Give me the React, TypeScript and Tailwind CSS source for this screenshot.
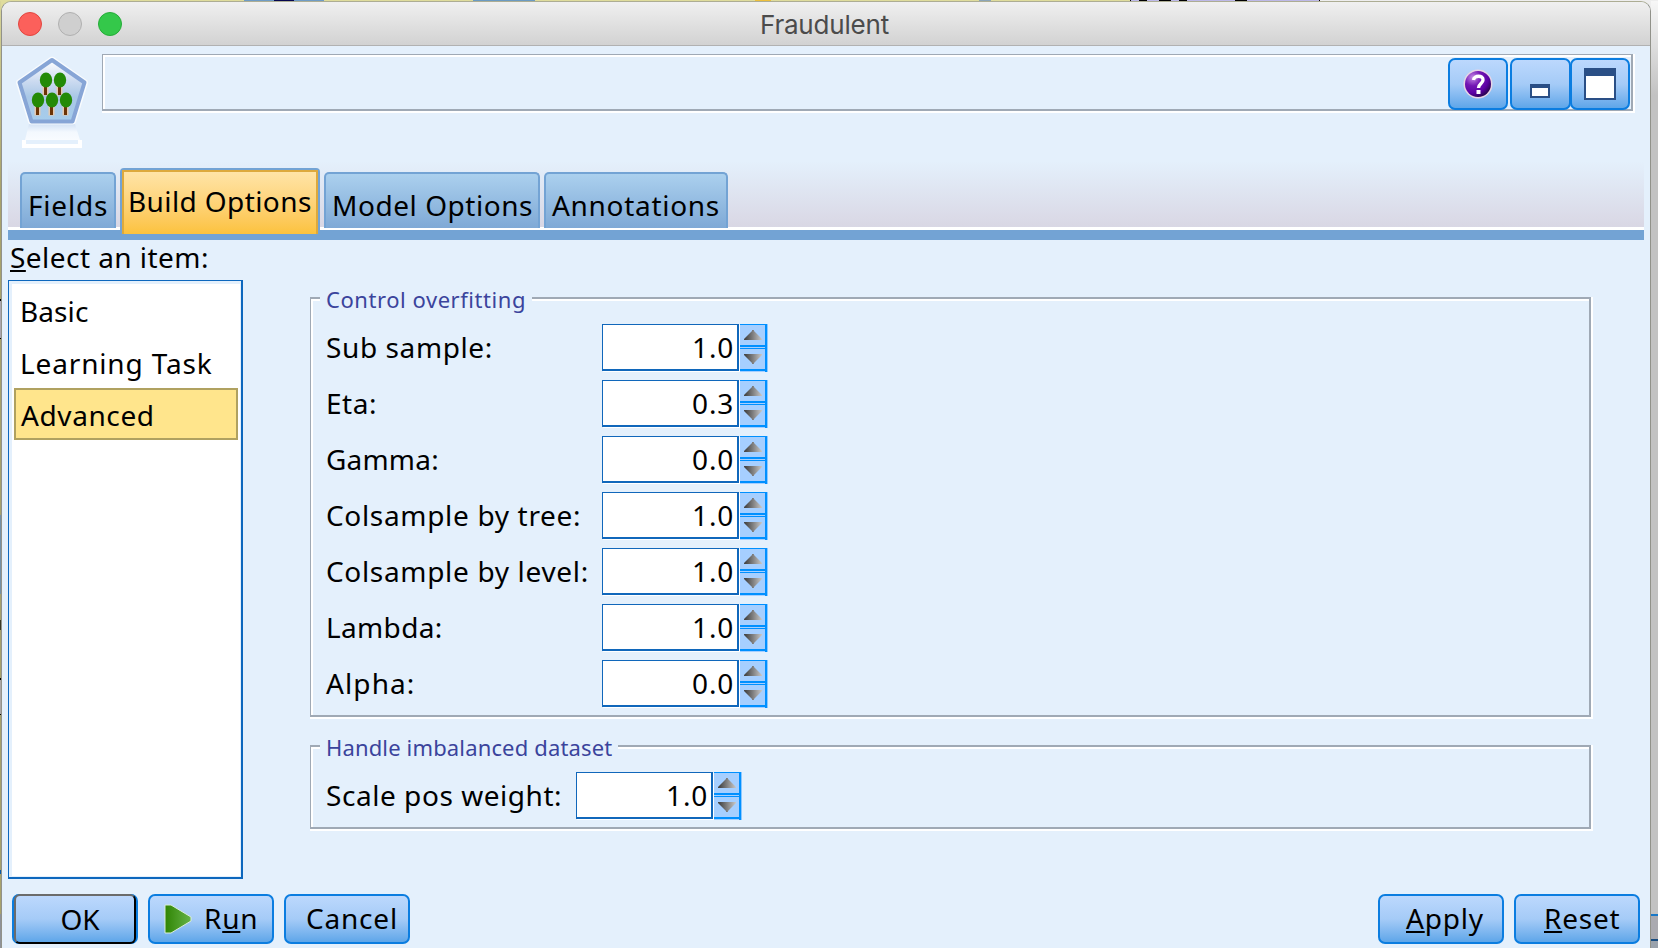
import type { ReactNode } from 'react';

const FONT = 'font-["Noto_Sans","Open_Sans",sans-serif] text-[28px] whitespace-pre text-black';
const TEXT = `${FONT} leading-[48px]`;

function Key({ children }: { children: ReactNode }) {
  return <span className="underline decoration-2 underline-offset-2 [text-decoration-skip-ink:none]">{children}</span>;
}

function ModelIcon() {
  return (
    <svg width="76" height="96" viewBox="14 54 76 96">
      <defs>
        <linearGradient id="penta" x1="0" y1="0" x2="0" y2="1">
          <stop offset="0" stopColor="#ffffff" />
          <stop offset="0.35" stopColor="#cbdaf0" />
          <stop offset="0.6" stopColor="#a9c7e6" />
          <stop offset="1" stopColor="#a6cdec" />
        </linearGradient>
        <linearGradient id="reflect" x1="0" y1="0" x2="0" y2="1">
          <stop offset="0" stopColor="#d3e2f5" />
          <stop offset="0.5" stopColor="#f3f8fe" />
          <stop offset="1" stopColor="#f8fbff" />
        </linearGradient>
      </defs>
      <path d="M22 140h60v8H22z" fill="#fff" />
      <path d="M26 140h52v4H26z" fill="#e4f0fc" />
      <path d="M29 124h46l5 16H25z" fill="url(#reflect)" />
      <path d="M52 59.5 85 82.500 73 121.500H31L19 82.500z" fill="url(#penta)" stroke="#fff" strokeWidth="6" strokeLinejoin="round" opacity="0.75" />
      <path d="M52 60 84.500 82.500 72.500 121.500H31.500L19.500 82.500z" fill="url(#penta)" stroke="#87a5d6" strokeWidth="4" strokeLinejoin="round" />
      {[[46, 80], [60, 80], [38, 100], [52, 100], [66, 100]].map(([x, y]) => (
        <g key={`${x}-${y}`}>
          <rect x={x - 3.5} y={y + 5} width="6" height="10.500" fill="#e3c9b0" />
          <rect x={x - 2} y={y + 5} width="3" height="10" fill="#6b3407" />
          <ellipse cx={x} cy={y} rx="6.200" ry="7.500" fill="#238a06" />
        </g>
      ))}
    </svg>
  );
}

function HelpIcon() {
  return (
    <svg width="30" height="30" viewBox="0 0 30 30">
      <defs>
        <radialGradient id="orb" cx="0.3" cy="0.25" r="0.8">
          <stop offset="0" stopColor="#c58ae6" />
          <stop offset="0.4" stopColor="#7417b4" />
          <stop offset="0.75" stopColor="#5c00a4" />
          <stop offset="1" stopColor="#2b0450" />
        </radialGradient>
      </defs>
      <circle cx="15" cy="15" r="14.500" fill="#e6d5e6" />
      <circle cx="15" cy="15" r="13" fill="url(#orb)" />
      <path d="M10.500 11C11 6 20.500 6 20 11c0 3.500-4.500 3.500-4.500 8" fill="none" stroke="#fff" strokeWidth="3.400" />
      <rect x="13.500" y="21" width="4" height="4" fill="#fff" />
    </svg>
  );
}

const FACE = 'rounded-[7px] border-2 border-[#0b7de0] bg-linear-to-b from-[#bcd8fd] via-[#a5cbf7] to-[#5ea6e9]';

function ToolButton({ children, className }: { children: ReactNode; className: string }) {
  return <button className={`flex h-[52px] shrink-0 items-center justify-center ${FACE} ${className}`}>{children}</button>;
}

function Header() {
  return (
    <div className="flex h-[115px] pt-2">
      <div className="ml-3 w-[88px] shrink-0"><ModelIcon /></div>
      <div className="h-[59px] w-[1533px] border-r-2 border-b-2 border-white">
        <div className="h-full border-t border-r-2 border-b-2 border-l border-[#9fa9b5]">
          <div className="flex h-full justify-end border-t-2 border-l-2 border-white pt-px">
            <ToolButton className="mr-[2px] w-[60px]"><HelpIcon /></ToolButton>
            <ToolButton className="-mr-px w-[61px]">
              <span className="mt-[14px] mr-px h-[14px] w-5 border-2 border-t-4 border-[#2a4f86] bg-white" />
            </ToolButton>
            <ToolButton className="mr-px w-[60px]">
              <span className="h-8 w-8 border-2 border-t-8 border-[#2a4f86] bg-white" />
            </ToolButton>
          </div>
        </div>
      </div>
    </div>
  );
}

function Tab({ label, className }: { label: string; className: string }) {
  return (
    <div className={`mt-[11px] h-14 overflow-hidden rounded-t-[5px] border-2 border-b-0 border-[#73a3d4] bg-linear-to-b from-[#abd0ee] to-[#7fa9d6] ${TEXT} ${className}`}>
      <div className="mt-[7px]">{label}</div>
    </div>
  );
}

function Tabs() {
  return (
    <div className="ml-[6px] w-[1636px]">
      <div className="flex h-[69px] items-start bg-[linear-gradient(to_bottom,#e4f0fc_0px,#d9d7e4_66px,#ffffff_66px,#ffffff_69px)] pl-3">
        <Tab label="Fields" className="w-24 pl-[6px] tracking-[0.8px]" />
        <div className={`relative mx-1 mt-[7px] h-[66px] w-[200px] rounded-t-[4px] border-2 border-b-0 border-[#73a3d4] tracking-[0.4px] ${TEXT}`}>
          <div className="h-full border-2 border-b-0 border-[#dda93c] bg-linear-to-b from-[#ffe4a6] to-[#fcc23c] pl-[4px]">
            <div className="mt-[5px]">Build Options</div>
          </div>
        </div>
        <Tab label="Model Options" className="mr-1 w-[216px] pl-[6px] tracking-[0.55px]" />
        <Tab label="Annotations" className="w-[184px] pl-[6px] tracking-[0.7px]" />
      </div>
      <div className="h-[10px] bg-[#73a3d4]" />
    </div>
  );
}

function ItemList() {
  return (
    <div className="h-[599px] w-[235px] border-t border-r-2 border-b-2 border-l border-[#0d67bd] bg-white">
      <div className={`h-full border-t-[3px] border-r border-b border-l-[3px] border-[#e4f0fc] px-[2px] ${FONT}`}>
        <div className="h-[52px] pl-[6px] leading-[54px] tracking-[0.1px]">Basic</div>
        <div className="h-[52px] pl-[6px] leading-[54px] tracking-[0.85px]">Learning Task</div>
        <div className="h-[52px] w-56 border-2 border-[#b0a160] bg-[#ffe58c] pl-[5px] leading-[50px] tracking-[0.6px]">Advanced</div>
      </div>
    </div>
  );
}

function Arrow({ down }: { down?: boolean }) {
  return (
    <svg width="18" height="10" viewBox="0 0 18 10" className="ml-1 shrink-0">
      <defs>
        <linearGradient id="arrow">
          <stop offset="0.1" stopColor="#484848" />
          <stop offset="0.5" stopColor="#808080" />
          <stop offset="1" stopColor="#c8c8c8" />
        </linearGradient>
      </defs>
      <path d={down ? 'M0 0h18v1L10 9v1H8V9L0 1z' : 'M0 10h18V9L10 1V0H8v1L0 9z'} fill="url(#arrow)" />
    </svg>
  );
}

function Spinner({ value }: { value: string }) {
  return (
    <div className="flex h-12 shrink-0">
      <div className="mr-px h-[47px] w-[137px] border-t border-r-2 border-b-2 border-l border-[#1067bb] bg-white pr-[3px] text-right leading-[45px] tracking-[0.8px] shadow-[1px_1px_0_#ffffff]">{value}</div>
      <div className="flex h-12 w-7 border-r border-[#8cc8ff] bg-[#a6cfff]">
        <div className="flex w-full flex-col border-r-2 border-[#0090ff]">
          <div className="h-[21px] border-t border-[#0090ff] pt-[5px]"><Arrow /></div>
          <div className="h-1 border-t-2 border-b border-[#0090ff]" />
          <div className="h-[22px] border-b-2 border-[#0090ff] pt-[5px]"><Arrow down /></div>
        </div>
      </div>
    </div>
  );
}

function Row({ label, value, labelClass }: { label: string; value: string; labelClass: string }) {
  return (
    <div className={`flex h-14 ${FONT}`}>
      <div className={`shrink-0 leading-[46px] ${labelClass}`}>{label}</div>
      <Spinner value={value} />
    </div>
  );
}

function Group({ title, legendClass, className, children }: { title: string; legendClass: string; className: string; children: ReactNode }) {
  return (
    <div className={`w-[1283px] border-r-2 border-b-2 border-white ${className}`}>
      <div className="h-full border-2 border-l border-[#9fa9b5]">
        <div className="h-full border-t-2 border-l-2 border-white">
          <div className={`-mt-[8px] ml-[7px] h-[31px] bg-[#e4f0fc] pl-[6px] font-["Noto_Sans","Open_Sans",sans-serif] text-[22px] leading-[13px] whitespace-pre text-[#3b449c] ${legendClass}`}>{title}</div>
          <div className="pl-[13px]">{children}</div>
        </div>
      </div>
    </div>
  );
}

const OVERFITTING = [
  ['Sub sample:', '1.0', 'tracking-[0.6px]'],
  ['Eta:', '0.3', 'tracking-[0.5px]'],
  ['Gamma:', '0.0', 'tracking-[0.2px]'],
  ['Colsample by tree:', '1.0', 'tracking-[0.67px]'],
  ['Colsample by level:', '1.0', 'tracking-[0.67px]'],
  ['Lambda:', '1.0', 'tracking-[0.35px]'],
  ['Alpha:', '0.0', 'tracking-[1.1px]'],
];

function Body() {
  return (
    <div className="flex h-[654px] pl-[6px]">
      <div className="w-[302px] shrink-0">
        <div className="h-10">
          <div className={`h-10 pl-[2px] leading-[34px] tracking-[0.45px] ${FONT}`}><Key>S</Key>elect an item:</div>
        </div>
        <ItemList />
      </div>
      <div className="pt-[57px]">
        <Group title="Control overfitting" className="h-[422px]" legendClass="w-[212px] tracking-[0.55px]">
          {OVERFITTING.map(([label, value, tracking]) => (
            <Row key={label} label={label} value={value} labelClass={`w-[276px] ${tracking}`} />
          ))}
        </Group>
        <Group title="Handle imbalanced dataset" className="mt-[26px] h-[86px]" legendClass="w-[298px] tracking-[0.15px]">
          <Row label="Scale pos weight:" value="1.0" labelClass="w-[250px] tracking-[0.55px]" />
        </Group>
      </div>
    </div>
  );
}

function Button({ children, className }: { children: ReactNode; className: string }) {
  return <button className={`flex h-[50px] w-[126px] shrink-0 ${FACE} ${FONT} leading-[44px] tracking-[0.8px] ${className}`}>{children}</button>;
}

function Footer() {
  return (
    <div className="flex gap-[10px] pl-[10px]">
      <div className="h-[50px] w-[126px] rounded-[7px] border-x-2 border-[#0b7de0] bg-[#0b7de0]">
        <button className={`h-[50px] w-[122px] rounded-[6px] border-2 border-t-[#6b6b6b] border-r-black border-b-black border-l-[#6b6b6b] bg-linear-to-b from-[#bcd8fd] via-[#a5cbf7] to-[#5ea6e9] pl-[10px] ${FONT}`}>
          <div className="-mt-px leading-[46px]">OK</div>
        </button>
      </div>
      <Button className="pl-[14px]">
        <svg width="28" height="32" viewBox="0 0 28 32" className="mt-[7px]">
          <defs>
            <linearGradient id="play"><stop offset="0" stopColor="#2f8503" /><stop offset="1" stopColor="#66b348" /></linearGradient>
          </defs>
          <path d="M1 2h6l20 12v4L7 30H1z" fill="url(#play)" stroke="#d9ecd9" strokeWidth="1" />
        </svg>
        <span className="ml-[12px]">R<Key>u</Key>n</span>
      </Button>
      <Button className="pl-5">Cancel</Button>
      <Button className="ml-[958px] pl-[26px]"><Key>A</Key>pply</Button>
      <Button className="pl-7"><Key>R</Key>eset</Button>
    </div>
  );
}

export default function App() {
  return (
    <div className="flex h-[948px] w-[1658px] flex-col overflow-hidden bg-[#c2c2c2]">
      <div className="flex h-px shrink-0 bg-[#dfdc9c]">
        <div className="ml-[244px] flex h-full w-20 justify-center bg-[#6f9cc5]"><div className="h-full w-5 bg-[#06064e]" /></div>
        <div className="ml-[149px] h-full w-[62px] bg-[#6b9bc2]" />
        <div className="ml-[220px] h-full w-4 bg-[#efc03c]" />
        <div className="ml-[208px] h-full w-3 bg-[#8ba5b8]" />
        <div className="ml-[139px] flex h-full w-[190px] border-x border-black bg-[#bdb9e8] pl-2">
          <div className="w-2 bg-black" /><div className="ml-3 w-3 bg-black" /><div className="ml-2 w-2 bg-black" /><div className="ml-12 w-3 bg-black" />
        </div>
        <div className="h-full flex-1 bg-[#eeeeee]" />
      </div>
      <div className="flex h-[947px] shrink-0 bg-[linear-gradient(to_right,#dfdc9c_0%,#dfdc9c_50%,#eeeeee_90%)]">
        <div className="flex w-px shrink-0 flex-col bg-linear-to-b from-[#d9d69a] to-[#a8a26c] to-20%">
          <div className="mt-[298px] h-[2px] bg-black" />
          <div className="h-[37px] bg-[#aaa6b0]" />
          <div className="h-px bg-black" />
          <div className="mt-[176px] h-[80px] bg-[#7390a8]" />
          <div className="mt-[26px] h-[10px] bg-[#3a3824]" />
          <div className="mt-[48px] h-[2px] bg-black" />
          <div className="h-[34px] bg-[#aaa6a6]" />
          <div className="h-px bg-black" />
          <div className="mt-[155px] h-1 bg-[#0758a8]" />
          <div className="mt-[40px] h-[34px] bg-[#8e9298]" />
        </div>
        <div className="w-[1650px] shrink-0 overflow-hidden rounded-t-[10px] border-x border-t border-x-[#91928a] border-t-[#adad94] bg-[#e4f0fc]">
          <div className="flex h-11 items-center border-b border-[#b1b1b1] bg-linear-to-b from-[#f0f0f0] to-[#d2d2d2]">
            <span className="ml-4 size-6 rounded-full border border-[#e2463f] bg-[#fc605b]" />
            <span className="ml-4 size-6 rounded-full border border-[#b0b0b0] bg-[#cfcfcf]" />
            <span className="ml-4 size-6 rounded-full border border-[#25ac38] bg-[#34c84a]" />
            <span className='mt-[2px] ml-[638px] font-["Inter",sans-serif] text-[26px] tracking-[-0.2px] text-[#4b4b4b]'>Fraudulent</span>
          </div>
          <Header />
          <Tabs />
          <Body />
          <Footer />
        </div>
        <div className="flex flex-1 flex-col bg-linear-to-b from-[#f7f7f7] to-[#c2c2c2] to-10%">
          <div className="mt-[913px] h-[2px] bg-[#1878c8]" />
          <div className="h-6 bg-[#aaaab0]" />
          <div className="h-[2px] bg-[#174c80]" />
          <div className="h-[7px] bg-[#9aa2ac]" />
        </div>
      </div>
    </div>
  );
}
